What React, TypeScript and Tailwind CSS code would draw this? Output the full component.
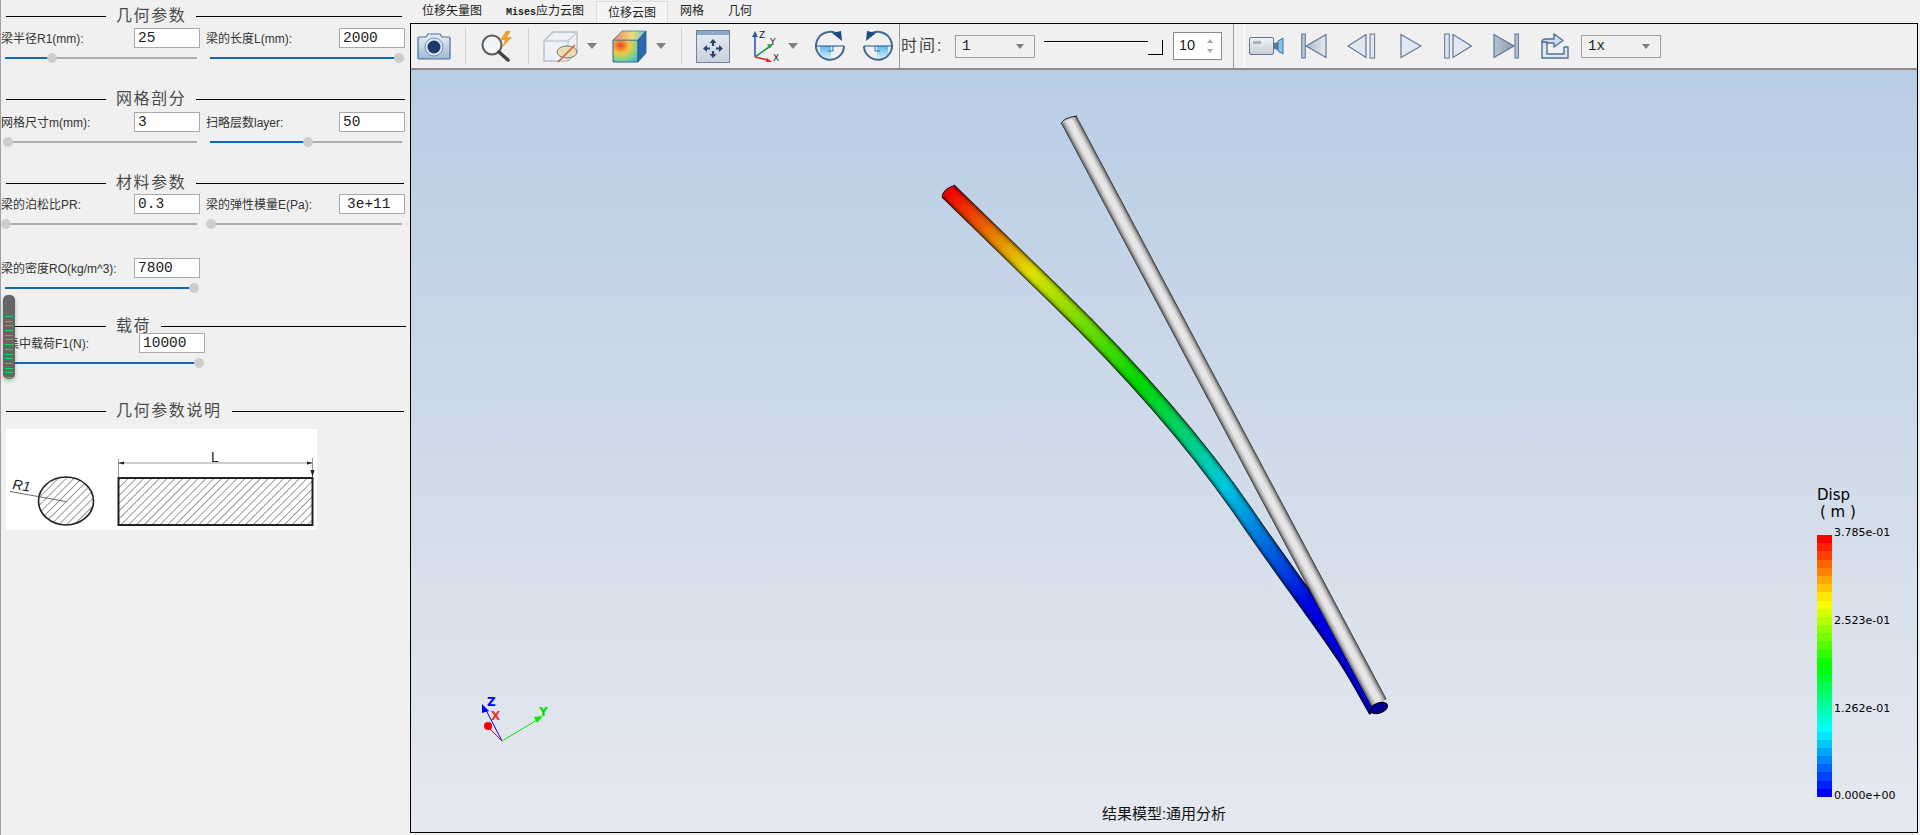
import type { ReactNode } from 'react';

const TAB_TEXT = 'text-[12px] text-[#222] leading-[23px]';

function SectionTitle({ title, first = 100, ml = 6, rest, className = '' }: { title: string; first?: number; ml?: number; rest: number; className?: string }) {
  return (
    <div className={`flex items-center h-[20px] ${className}`} style={{ marginLeft: ml }}>
      <div className="h-px bg-black" style={{ width: first }} />
      <span className="mx-[10px] text-[16px] tracking-[1.6px] leading-[20px] text-[#4a4a4a] whitespace-nowrap">{title}</span>
      <div className="h-px bg-black" style={{ width: rest }} />
    </div>
  );
}

function Field({ label, value, left, inputX, indent = 3 }: { label: string; value: string; left: number; inputX: number; indent?: number }) {
  return (
    <div className="flex items-center h-[20px]" style={{ paddingLeft: left, width: inputX + 66 }}>
      <span className="flex-1 pt-[2px] text-[12px] text-[#333] whitespace-nowrap">{label}</span>
      <div
        className="w-[66px] h-[20px] bg-white border border-[#a9a9a9] text-[14.5px] leading-[18px] text-[#222] font-['Liberation_Mono',monospace]"
        style={{ paddingLeft: indent }}
      >
        {value}
      </div>
    </div>
  );
}

function Slider({ x, width, thumb, filled = true }: { x: number; width: number; thumb: number; filled?: boolean }) {
  return (
    <div className="relative h-[16px]" style={{ marginLeft: x, width }}>
      <div className="absolute left-0 right-0 top-[7px] h-[2px] bg-[#adadad]" />
      {filled && <div className="absolute left-0 top-[7px] h-[2px] bg-[#0f69bb]" style={{ width: thumb - x }} />}
      <div className="absolute top-[3px] w-[10px] h-[10px] rounded-full bg-[#cdcdcd]" style={{ left: thumb - x - 5 }} />
    </div>
  );
}

function Pair({ a, b, indent }: { a: [string, string]; b: [string, string]; indent?: number }) {
  return (
    <div className="flex">
      <Field label={a[0]} value={a[1]} left={1} inputX={134} />
      <div className="w-[5px]" />
      <Field label={b[0]} value={b[1]} left={1} inputX={134} indent={indent} />
    </div>
  );
}

function Sliders({ a, b }: { a: number; b: number }) {
  return (
    <div className="flex">
      <div className="w-[205px]">
        <Slider x={5} width={192} thumb={a} filled={a > 10} />
      </div>
      <div className="w-[205px]">
        <Slider x={5} width={192} thumb={b - 205} filled={b > 215} />
      </div>
    </div>
  );
}

function BeamSketch() {
  return (
    <svg width="311" height="101" viewBox="0 0 311 101">
      <defs>
        <pattern id="hatch" width="5.5" height="5.5" patternUnits="userSpaceOnUse" patternTransform="rotate(45)">
          <line x1="0" y1="0" x2="0" y2="5.5" stroke="#333" strokeWidth="1" />
        </pattern>
      </defs>
      <rect width="311" height="101" fill="#fff" />
      <ellipse cx="60" cy="72" rx="27.5" ry="24" fill="url(#hatch)" stroke="#222" strokeWidth="1.6" />
      <line x1="4" y1="62.5" x2="60" y2="72.5" stroke="#444" strokeWidth="0.8" />
      <text x="6" y="60" fontSize="14" fontStyle="italic" fontFamily="Liberation Sans" fill="#222" transform="rotate(8 6 60)">R1</text>
      <rect x="112.5" y="49" width="194" height="47" fill="url(#hatch)" stroke="#222" strokeWidth="2" />
      <line x1="112" y1="34" x2="307" y2="34" stroke="#999" strokeWidth="1" />
      <line x1="112.5" y1="30" x2="112.5" y2="48" stroke="#999" />
      <line x1="306.5" y1="29" x2="306.5" y2="48" stroke="#999" />
      <path d="M112 34l6-1.5v3zM307 34l-6-1.5v3zM306.5 48l-2-7h4z" fill="#222" />
      <text x="205" y="33" fontSize="14" fontFamily="Liberation Sans" fill="#222">L</text>
    </svg>
  );
}

function ParamPanel() {
  return (
    <aside className="relative w-[410px] h-full border-l border-[#a0a0a0] shrink-0">
      <div className="-ml-px pt-[6px]">
        <SectionTitle title="几何参数" rest={206} />
        <div className="mt-[2px]"><Pair a={['梁半径R1(mm):', '25']} b={['梁的长度L(mm):', '2000']} /></div>
        <div className="mt-[2px]"><Sliders a={52} b={399} /></div>

        <SectionTitle className="mt-[23px]" title="网格剖分" rest={209} />
        <div className="mt-[3px]"><Pair a={['网格尺寸m(mm):', '3']} b={['扫略层数layer:', '50']} /></div>
        <div className="mt-[2px]"><Sliders a={8} b={308} /></div>

        <SectionTitle className="mt-[23px]" title="材料参数" rest={208} />
        <div className="mt-px"><Pair a={['梁的泊松比PR:', '0.3']} b={['梁的弹性模量E(Pa):', '3e+11']} indent={7} /></div>
        <div className="mt-[2px]"><Sliders a={6} b={211} /></div>

        <div className="mt-[26px]"><Field label="梁的密度RO(kg/m^3):" value="7800" left={1} inputX={134} /></div>
        <div className="mt-[2px]"><Slider x={5} width={192} thumb={194} /></div>

        <SectionTitle className="mt-[20px]" title="载荷" first={91} ml={15} rest={245} />
        <div className="-mt-[3px]"><Field label="集中载荷F1(N):" value="10000" left={7} inputX={139} /></div>
        <div className="mt-[2px]"><Slider x={10} width={192} thumb={199} /></div>

        <SectionTitle className="mt-[30px]" title="几何参数说明" rest={172} />
        <div className="mt-[8px] ml-[6px] w-[311px]"><BeamSketch /></div>
      </div>

      {/* 悬浮手柄 */}
      <div className="absolute left-[2px] top-[295px] w-[12px] h-[84px] rounded-[5px] bg-[#666] shadow-[0_2px_4px_rgba(0,0,0,0.25)] flex flex-col gap-[3.7px] items-center pt-[21px]">
        {Array.from({ length: 14 }).map((_, i) => (
          <div key={i} className="w-[8px] h-px bg-[#18d848] shrink-0" />
        ))}
      </div>
    </aside>
  );
}

/* 工具栏图标 */
function CameraIcon() {
  return (
    <svg width="34" height="30" viewBox="0 0 34 30" className="shrink-0 ml-[6px]">
      <defs>
        <linearGradient id="cam" x1="0" y1="0" x2="0" y2="1">
          <stop offset="0" stopColor="#e8f0f8" />
          <stop offset="1" stopColor="#9fb9d6" />
        </linearGradient>
      </defs>
      <path d="M2 6h7l2-3h12l2 3h7a1 1 0 0 1 1 1v20a1 1 0 0 1-1 1H2a1 1 0 0 1-1-1V7a1 1 0 0 1 1-1z" fill="url(#cam)" stroke="#4d6f9c" strokeWidth="1.2" />
      <circle cx="17" cy="16" r="9" fill="#dfe8f2" stroke="#6d8cb2" />
      <circle cx="17" cy="16" r="6.5" fill="#1c3a70" />
    </svg>
  );
}

function MagnifierIcon() {
  return (
    <svg width="35" height="32" viewBox="0 0 35 32" className="shrink-0 ml-[14px]">
      <circle cx="12" cy="15" r="9.5" fill="#f2f5f7" stroke="#5a5a5a" strokeWidth="2" />
      <path d="M19 22l9 8" stroke="#444" strokeWidth="3.5" strokeLinecap="round" />
      <path d="M26 1l-6 9h5l-3 8 10-11h-5l4-6z" fill="#f0a030" />
    </svg>
  );
}

function GhostCubeIcon() {
  return (
    <svg width="35" height="34" viewBox="0 0 35 34" className="shrink-0 ml-[14px]">
      <path d="M1 12l9-9h24v20l-9 9H1z" fill="#eef1f5" stroke="#b7bfc9" strokeWidth="1.4" />
      <path d="M1 12h24v20M25 12l9-9" fill="none" stroke="#c6ccd4" strokeWidth="1.4" />
      <ellipse cx="24" cy="23" rx="10" ry="6" fill="#e8dcb0" stroke="#7a7a70" />
      <path d="M15 33l17-17" stroke="#d9603a" strokeWidth="1.6" />
    </svg>
  );
}

function ColorCubeIcon() {
  return (
    <svg width="35" height="34" viewBox="0 0 35 34" className="shrink-0 ml-[15px]">
      <defs>
        <radialGradient id="heat" cx="0.3" cy="0.25" r="1">
          <stop offset="0" stopColor="#e8402a" />
          <stop offset="0.35" stopColor="#f5c840" />
          <stop offset="0.65" stopColor="#7fd68a" />
          <stop offset="1" stopColor="#3fa8e0" />
        </radialGradient>
        <linearGradient id="heatTop" x1="0" y1="0" x2="1" y2="0">
          <stop offset="0" stopColor="#f08060" />
          <stop offset="0.6" stopColor="#e8e080" />
          <stop offset="1" stopColor="#60c0d8" />
        </linearGradient>
      </defs>
      <path d="M1 11h25v22H1z" fill="url(#heat)" stroke="#3c5f8c" />
      <path d="M1 11l9-9h24l-8 9z" fill="url(#heatTop)" stroke="#5a7ca4" strokeWidth="0.8" />
      <path d="M26 11l8-9v22l-8 9z" fill="#2a6ab0" stroke="#2f5688" strokeWidth="0.8" />
    </svg>
  );
}

function DropArrow({ className }: { className: string }) {
  return (
    <svg width="10" height="6" viewBox="0 0 10 6" className={`shrink-0 ${className}`}>
      <path d="M0 0h10L5 6z" fill="#808080" />
    </svg>
  );
}

function FitIcon() {
  return (
    <svg width="34" height="33" viewBox="0 0 34 33" className="shrink-0 ml-[14px]">
      <defs>
        <linearGradient id="win" x1="0" y1="0" x2="0" y2="1">
          <stop offset="0" stopColor="#e8ecf1" />
          <stop offset="1" stopColor="#c8d0da" />
        </linearGradient>
      </defs>
      <rect x="0.5" y="0.5" width="33" height="32" fill="url(#win)" stroke="#6d82a0" />
      <rect x="1" y="1" width="32" height="4" fill="#8fa8c8" />
      <path d="M17 9l-3.5 4h2.4v3h2.2v-3h2.4zM17 28l-3.5-4h2.4v-3h2.2v3h2.4zM7 18.5l4-3.5v2.4h3v2.2h-3V22zM27 18.5l-4-3.5v2.4h-3v2.2h3V22z" fill="#24456f" />
    </svg>
  );
}

function TriadIcon() {
  return (
    <svg width="34" height="34" viewBox="0 0 34 34" className="shrink-0 ml-[20px]">
      <path d="M5 28V7" stroke="#2a5cb0" strokeWidth="1.6" />
      <path d="M5 2l-3 6h6z" fill="#2a5cb0" />
      <path d="M5 28l14-10" stroke="#1c9c50" strokeWidth="1.6" />
      <path d="M23 15l-6 .5 2.8 4z" fill="#1c9c50" />
      <path d="M5 28l13 3" stroke="#e82828" strokeWidth="1.6" />
      <path d="M22 33l-5-4-1 4z" fill="#e82828" />
      <text x="9" y="9" fontSize="9" fontFamily="DejaVu Sans" fill="#222">Z</text>
      <text x="20" y="16" fontSize="9" fontFamily="DejaVu Sans" fill="#222">Y</text>
      <text x="23" y="32" fontSize="9" fontFamily="DejaVu Sans" fill="#222">X</text>
    </svg>
  );
}

function RotateIcon({ flip, className }: { flip?: boolean; className: string }) {
  return (
    <svg width="32" height="32" viewBox="0 0 32 32" className={`shrink-0 ${className}`}>
      <defs>
        <linearGradient id="rotQ" x1="0" y1="0" x2="0" y2="1">
          <stop offset="0" stopColor="#5cb8ea" />
          <stop offset="1" stopColor="#e4f3fb" />
        </linearGradient>
      </defs>
      <g transform={flip ? 'translate(32 0) scale(-1 1)' : undefined}>
        <path d="M6 16h11v14a14 14 0 0 1-11-4z" fill="url(#rotQ)" />
        <path d="M26 6A14 14 0 1 0 30 16" fill="none" stroke="#44688e" strokeWidth="2" />
        <path d="M2 16h28" stroke="#2f6ea6" strokeWidth="1.2" />
        <path d="M19 16v5h-5" fill="none" stroke="#2f6ea6" />
        <path d="M18 3l9-2 1 10z" fill="#1e4a7e" />
      </g>
    </svg>
  );
}

function VideoIcon() {
  return (
    <svg width="35" height="20" viewBox="0 0 35 20" className="shrink-0 ml-[4px]">
      <defs>
        <linearGradient id="vid" x1="0" y1="0" x2="0" y2="1">
          <stop offset="0" stopColor="#f2f4f7" />
          <stop offset="1" stopColor="#c6cdd6" />
        </linearGradient>
      </defs>
      <rect x="0.5" y="1.5" width="24" height="17" rx="1.5" fill="url(#vid)" stroke="#5d7698" />
      <rect x="4" y="5" width="8" height="3" fill="#a8b0ba" />
      <path d="M25 7l4-1v8l-4-1z" fill="#5d7698" />
      <path d="M29 5l5-3v16l-5-3z" fill="#7cc4e8" stroke="#4f7198" />
    </svg>
  );
}

function PlayerIcon({ kind, w, className }: { kind: 'first' | 'prev' | 'play' | 'next' | 'last'; w: number; className: string }) {
  const fill = `url(#pl-${kind})`;
  return (
    <svg width={w} height="26" viewBox={`0 0 ${w} 26`} className={`shrink-0 ${className}`}>
      <defs>
        <linearGradient id={`pl-${kind}`} x1="0" y1="0" x2="1" y2="0">
          <stop offset="0" stopColor={kind === 'first' ? '#a9b6c6' : kind === 'last' ? '#b8c2ce' : '#e4e9f0'} />
          <stop offset="1" stopColor={kind === 'first' ? '#e6eaf0' : kind === 'last' ? '#8d9db2' : '#dfe6ee'} />
        </linearGradient>
      </defs>
      {kind === 'first' && (
        <>
          <rect x="0.7" y="1" width="3.6" height="24" fill="#b6c2d0" stroke="#5d7698" />
          <path d="M25 1.5v23L5 13z" fill={fill} stroke="#5d7698" strokeWidth="1.2" />
        </>
      )}
      {kind === 'prev' && (
        <>
          <path d="M19 1.5v23L1 13z" fill={fill} stroke="#5d7698" strokeWidth="1.2" />
          <rect x="23" y="1" width="4.6" height="24" fill="#dfe6ee" stroke="#5d7698" />
        </>
      )}
      {kind === 'play' && <path d="M1 1.5v23L21 13z" fill={fill} stroke="#5d7698" strokeWidth="1.2" />}
      {kind === 'next' && (
        <>
          <rect x="0.7" y="1" width="4.6" height="24" fill="#dfe6ee" stroke="#5d7698" />
          <path d="M9 1.5v23L27.5 13z" fill={fill} stroke="#5d7698" strokeWidth="1.2" />
        </>
      )}
      {kind === 'last' && (
        <>
          <path d="M1 1.5v23L21 13z" fill={fill} stroke="#5d7698" strokeWidth="1.2" />
          <rect x="22" y="1" width="3.6" height="24" fill="#b6c2d0" stroke="#5d7698" />
        </>
      )}
    </svg>
  );
}

function ExportIcon() {
  return (
    <svg width="29" height="27" viewBox="0 0 29 27" className="shrink-0 ml-[21px]">
      <path d="M2 9V25H28V14H24V21H7V9Z" fill="#dfe7f0" stroke="#4f7198" strokeWidth="1.4" strokeLinejoin="round" />
      <path d="M2 9Q2 6 6 6H14V1L23 7.5L14 14V10H7V9Z" fill="#cfdcea" stroke="#4f7198" strokeWidth="1.4" strokeLinejoin="round" />
    </svg>
  );
}

function Sep({ className, dark }: { className: string; dark?: boolean }) {
  return <div className={`w-px shrink-0 ${dark ? 'h-full bg-[#9a9a9a]' : 'h-[36px] bg-[#d0d0d0]'} ${className}`} />;
}

function Combo({ value, className }: { value: string; className: string }) {
  return (
    <div className={`flex items-center justify-between w-[80px] h-[23px] border border-[#a0a0a0] px-[6px] shrink-0 text-[14px] text-[#222] font-['Liberation_Mono',monospace] ${className}`}>
      <span>{value}</span>
      <svg width="8" height="5" viewBox="0 0 8 5" className="mr-[4px]"><path d="M0 0h8L4 5z" fill="#808080" /></svg>
    </div>
  );
}

function TimeSlider() {
  return (
    <div className="relative w-[119px] h-[20px] ml-[9px] shrink-0 mt-[4px]">
      <div className="absolute left-0 right-[14px] top-[3px] h-px bg-black" />
      <div className="absolute left-0 right-[14px] top-[4px] h-px bg-white" />
      <div className="absolute right-0 top-[2px] w-[15px] h-[15px] border-r border-b border-black bg-[#f0f0f0]" />
    </div>
  );
}

function SpinBox() {
  return (
    <div className="flex items-center justify-between w-[49px] h-[28px] ml-[10px] border border-[#8a8a8a] bg-white pl-[5px] pr-[8px] shrink-0 text-[14.5px] text-[#222]">
      <span>10</span>
      <svg width="6" height="14" viewBox="0 0 6 14"><path d="M3 0l3 4H0zM3 14l3-4H0z" fill="#a8a8a8" /></svg>
    </div>
  );
}

function Toolbar() {
  return (
    <div className="flex items-center h-[46px] bg-[#f0f0f0] border-b-2 border-[#8a8a8a] shrink-0">
      <CameraIcon />
      <Sep className="ml-[14px]" />
      <MagnifierIcon />
      <Sep className="ml-[13px]" />
      <GhostCubeIcon />
      <DropArrow className="ml-[9px]" />
      <ColorCubeIcon />
      <DropArrow className="ml-[9px]" />
      <Sep className="ml-[15px]" />
      <FitIcon />
      <TriadIcon />
      <DropArrow className="ml-[4px]" />
      <RotateIcon className="ml-[16px]" />
      <RotateIcon flip className="ml-[16px]" />
      <Sep dark className="ml-[5px]" />
      <span className="w-[54px] ml-px shrink-0 text-[16px] tracking-[2px] text-[#444]">时间:</span>
      <Combo value="1" className="" />
      <TimeSlider />
      <SpinBox />
      <Sep dark className="ml-[11px]" />
      <div className="w-px h-full ml-[10px] bg-white shrink-0" />
      <VideoIcon />
      <PlayerIcon kind="first" w={26} className="ml-[17px]" />
      <PlayerIcon kind="prev" w={29} className="ml-[20px]" />
      <PlayerIcon kind="play" w={22} className="ml-[24px]" />
      <PlayerIcon kind="next" w={29} className="ml-[22px]" />
      <PlayerIcon kind="last" w={26} className="ml-[20px]" />
      <ExportIcon />
      <Combo value="1x" className="ml-[12px]" />
    </div>
  );
}

const COLORMAP = [
  { offset: '0', color: '#f00000' },
  { offset: '0.17', color: '#e0e000' },
  { offset: '0.4', color: '#00d800' },
  { offset: '0.6', color: '#00c8e0' },
  { offset: '0.72', color: '#0060e0' },
  { offset: '0.82', color: '#0000e0' },
  { offset: '1', color: '#0000d8' },
];

const DEFORMED = 'M948 191 L1057 297 C1130 368 1198 445 1247 517 C1281 567 1316 612 1346 657 C1361 680 1368 695 1377 710';
const ORIGINAL = 'M1069 120 L1379 703';

/* 三维模型，坐标用页面坐标 */
function BeamModel() {
  return (
    <svg className="absolute left-[-411px] top-[-70px]" width="1920" height="835" viewBox="0 0 1920 835">
      <defs>
        <linearGradient id="disp" gradientUnits="userSpaceOnUse" x1="948" y1="191" x2="1379" y2="707">
          {COLORMAP.map((s) => (
            <stop key={s.offset} offset={s.offset} stopColor={s.color} />
          ))}
        </linearGradient>
      </defs>
      <path d={DEFORMED} fill="none" stroke="#000" strokeWidth="18" />
      <path d={DEFORMED} fill="none" stroke="url(#disp)" strokeWidth="17" opacity="0.6" />
      <path d={DEFORMED} fill="none" stroke="url(#disp)" strokeWidth="14" opacity="0.6" />
      <path d={DEFORMED} fill="none" stroke="url(#disp)" strokeWidth="11" opacity="0.7" />
      <path d={DEFORMED} fill="none" stroke="url(#disp)" strokeWidth="7" />
      <path d="M942 197Q943 189 953 186" fill="#e80000" stroke="#111" />

      <path d={ORIGINAL} stroke="#111" strokeWidth="17" />
      <path d={ORIGINAL} stroke="#777" strokeWidth="16" />
      <path d={ORIGINAL} stroke="#aaa" strokeWidth="13" />
      <path d={ORIGINAL} stroke="#ccc" strokeWidth="10" />
      <path d={ORIGINAL} stroke="#e6e6e6" strokeWidth="6" />
      <path d="M1061 124Q1063 118 1077 116" fill="#ddd" stroke="#111" />

      <ellipse cx="1379" cy="708" rx="9" ry="5" fill="#000090" stroke="#001" transform="rotate(-20 1379 708)" />
    </svg>
  );
}

function AxisTriad() {
  return (
    <svg className="absolute left-[-411px] top-[-70px]" width="1920" height="835" viewBox="0 0 1920 835">
      <path d="M502 741L486 710" stroke="#0000e0" />
      <path d="M502 741L488 727" stroke="#e00000" />
      <path d="M502 741L537 720" stroke="#00e000" />
      <path d="M482 704v9l7-2z" fill="#0000f0" />
      <circle cx="488" cy="726" r="4" fill="#f00000" />
      <path d="M534 717l9-1-6 7z" fill="#00f000" />
      <text x="487" y="706" fontSize="12" fontWeight="700" fontFamily="DejaVu Sans" fill="#0000f0">Z</text>
      <text x="491" y="720" fontSize="12" fontWeight="700" fontFamily="DejaVu Sans" fill="#f03030">X</text>
      <text x="539" y="716" fontSize="12" fontWeight="700" fontFamily="DejaVu Sans" fill="#00e000">Y</text>
    </svg>
  );
}

function bandColor(t: number) {
  // t 从 0（蓝）到 1（红）
  const hue = 240 * (1 - t);
  return `hsl(${hue} 100% 50%)`;
}

function Legend() {
  const bands = Array.from({ length: 32 }, (_, i) => bandColor(1 - i / 31));
  return (
    <div className="absolute left-[1406px] top-[417px] w-[100px] font-['DejaVu_Sans',sans-serif] text-black">
      <div className="text-[15px] leading-[17px]">Disp</div>
      <div className="pl-[3px] text-[15px] leading-[17px] whitespace-pre">( m )</div>
      <div className="flex mt-[14px]">
        <div className="w-[15px] h-[262px] flex flex-col shrink-0">
          {bands.map((c, i) => (
            <div key={i} className="flex-1" style={{ background: c }} />
          ))}
        </div>
        <div className="relative ml-[2px] flex-1 text-[11px] leading-[14px] whitespace-nowrap">
          <span className="absolute top-[-9px]">3.785e-01</span>
          <span className="absolute top-[79px]">2.523e-01</span>
          <span className="absolute top-[167px]">1.262e-01</span>
          <span className="absolute top-[254px]">0.000e+00</span>
        </div>
      </div>
    </div>
  );
}

function Viewport() {
  return (
    <div className="relative flex-1 overflow-hidden bg-gradient-to-b from-[#b9cde4] to-[#e6e9ef]">
      <BeamModel />
      <AxisTriad />
      <Legend />
      <div className="absolute bottom-[9px] left-0 right-0 text-center text-[15px] leading-[18px] text-[#111]">结果模型:通用分析</div>
    </div>
  );
}

function Tab({ children, active }: { children: ReactNode; active?: boolean }) {
  return (
    <div className={`${TAB_TEXT} ${active ? 'mt-px h-[22px] border border-b-0 border-[#dcdcdc] bg-[#f4f4f4] px-[11px]' : 'h-[23px] px-[12px]'}`}>
      {children}
    </div>
  );
}

export default function App() {
  return (
    <div className="flex w-[1920px] h-[835px] overflow-hidden bg-[#f0f0f0] font-['Liberation_Sans','Noto_Sans_CJK_SC',sans-serif]">
      <ParamPanel />
      <div className="flex flex-col w-[1508px] h-[833px]">
        <div className="flex h-[23px] shrink-0">
          <Tab>位移矢量图</Tab>
          <Tab>
            <span className="text-[10px] font-bold font-['Liberation_Mono',monospace]">Mises</span>应力云图
          </Tab>
          <Tab active>位移云图</Tab>
          <Tab>网格</Tab>
          <Tab>几何</Tab>
        </div>
        <div className="flex-1 min-h-0 flex flex-col border border-black">
          <Toolbar />
          <Viewport />
        </div>
      </div>
    </div>
  );
}
